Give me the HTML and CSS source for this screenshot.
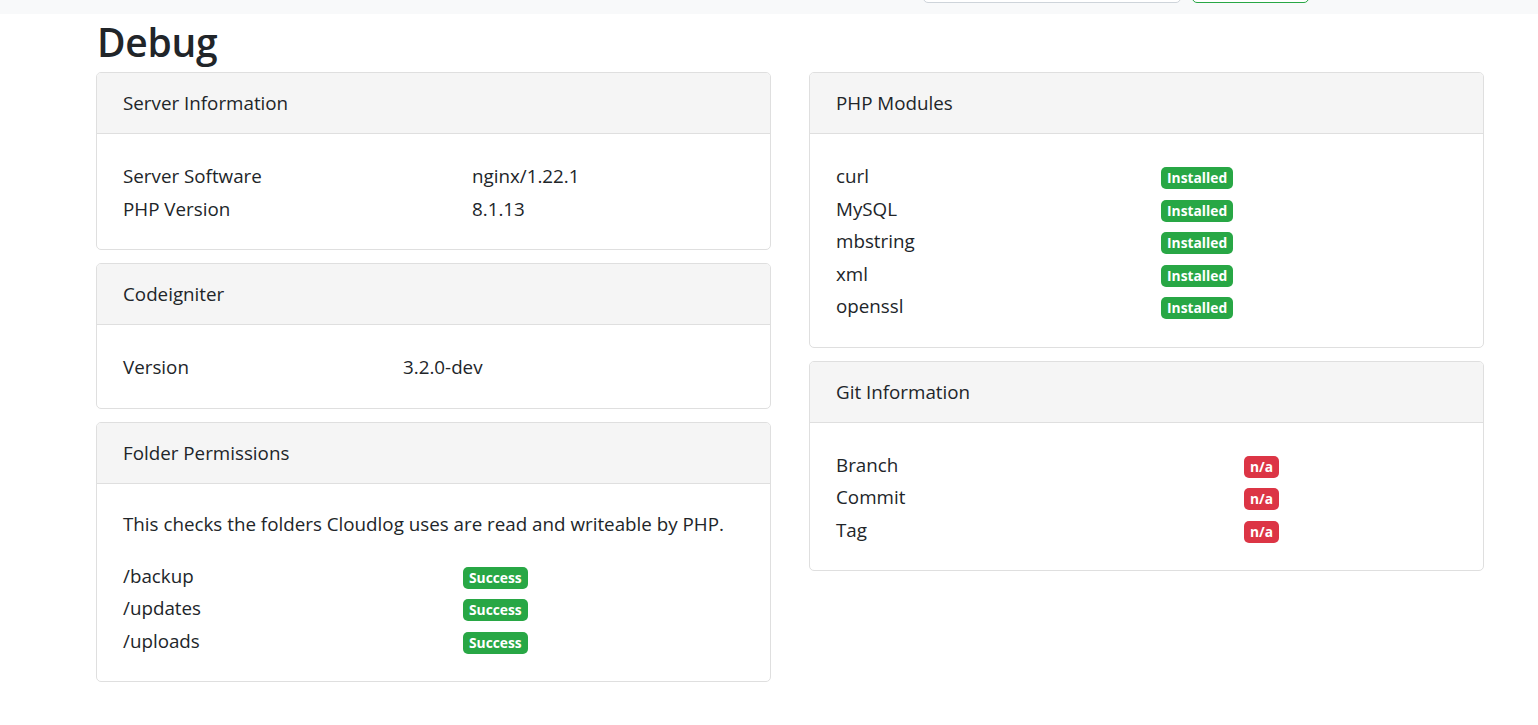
FILE: index.html
```html
<!DOCTYPE html>
<html>
<head>
<meta charset="utf-8">
<title>Debug</title>
<link rel="stylesheet" href="styles.css">
</head>
<body>
<nav class="navbar">
  <div class="nav-search"></div>
  <div class="nav-btn"></div>
</nav>
<main class="page">
  <h1 class="title">Debug</h1>
  <div class="columns">
    <div class="col">
      <section class="card">
        <div class="card-header">Server Information</div>
        <div class="card-body">
          <div class="rows rows-server">
            <span>Server Software</span><span>nginx/1.22.1</span>
            <span>PHP Version</span><span>8.1.13</span>
          </div>
        </div>
      </section>
      <section class="card">
        <div class="card-header">Codeigniter</div>
        <div class="card-body">
          <div class="rows rows-ci">
            <span>Version</span><span>3.2.0-dev</span>
          </div>
        </div>
      </section>
      <section class="card">
        <div class="card-header">Folder Permissions</div>
        <div class="card-body">
          <p class="intro">This checks the folders Cloudlog uses are read and writeable by PHP.</p>
          <div class="rows rows-folders">
            <span>/backup</span><span><span class="badge badge-success">Success</span></span>
            <span>/updates</span><span><span class="badge badge-success">Success</span></span>
            <span>/uploads</span><span><span class="badge badge-success">Success</span></span>
          </div>
        </div>
      </section>
    </div>
    <div class="col">
      <section class="card">
        <div class="card-header">PHP Modules</div>
        <div class="card-body">
          <div class="rows rows-modules">
            <span>curl</span><span><span class="badge badge-success">Installed</span></span>
            <span>MySQL</span><span><span class="badge badge-success">Installed</span></span>
            <span>mbstring</span><span><span class="badge badge-success">Installed</span></span>
            <span>xml</span><span><span class="badge badge-success">Installed</span></span>
            <span>openssl</span><span><span class="badge badge-success">Installed</span></span>
          </div>
        </div>
      </section>
      <section class="card">
        <div class="card-header">Git Information</div>
        <div class="card-body">
          <div class="rows rows-git">
            <span>Branch</span><span><span class="badge badge-danger">n/a</span></span>
            <span>Commit</span><span><span class="badge badge-danger">n/a</span></span>
            <span>Tag</span><span><span class="badge badge-danger">n/a</span></span>
          </div>
        </div>
      </section>
    </div>
  </div>
</main>
</body>
</html>
```

FILE: styles.css
```css
* { box-sizing: border-box; }

body {
  margin: 0;
  font-family: "Open Sans", "Noto Sans", sans-serif;
  font-size: 18.8px;
  color: #212529;
  background: #fff;
}

.navbar {
  height: 14px;
  background: #f8f9fa;
  overflow: hidden;
  display: flex;
  align-items: flex-end;
  padding-bottom: 11px;
  padding-left: 923px;
  gap: 11px;
}

.nav-search {
  flex: 0 0 258px;
  height: 40px;
  border: 1px solid #ced4da;
  border-radius: 5px;
  background: #fff;
}

.nav-btn {
  flex: 0 0 117px;
  height: 40px;
  border: 1px solid #28a745;
  border-radius: 5px;
  background: #fff;
}

.page {
  padding-left: 96px;
}

.title {
  margin: 0;
  height: 58px;
  font-size: 39px;
  font-weight: 600;
  line-height: 56px;
  padding-left: 1px;
  letter-spacing: -0.3px;
}

.columns {
  display: flex;
  gap: 38px;
  align-items: flex-start;
}

.col {
  width: 675px;
  display: flex;
  flex-direction: column;
  gap: 13px;
}

.card {
  border: 1px solid #dfdfdf;
  border-radius: 5px;
  overflow: hidden;
}

.card-header {
  background: #f5f5f5;
  border-bottom: 1px solid #dfdfdf;
  padding: 15px 25px 15px 26px;
  line-height: 30px;
}

.card-body {
  padding: 26px 25px 24px 26px;
}

.intro {
  margin: -1px 0 21px;
  line-height: 30px;
}

.rows {
  display: grid;
  grid-auto-rows: 32.5px;
  align-items: center;
  line-height: 30px;
}

.rows-server { grid-template-columns: 349px 1fr; }
.rows-ci { grid-template-columns: 280px 1fr; }
.rows-folders { grid-template-columns: 340px 1fr; }
.rows-modules { grid-template-columns: 325px 1fr; }
.rows-git { grid-template-columns: 408px 1fr; }

.badge {
  display: inline-block;
  font-size: 13.8px;
  font-weight: 700;
  line-height: 16px;
  padding: 3px 6px;
  border-radius: 5px;
  color: #fff;
  vertical-align: middle;
  position: relative;
  top: 0;
}

.badge-success { background: #28a745; }
.badge-danger { background: #dc3545; }
```
